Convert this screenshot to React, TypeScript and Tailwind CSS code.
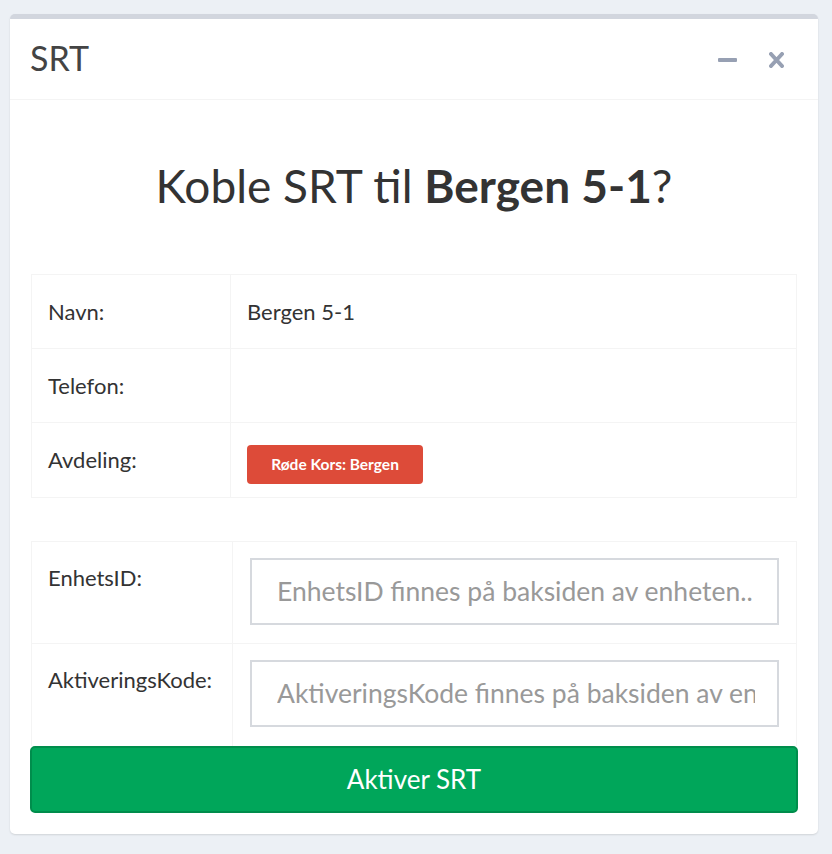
import React from 'react';

const FONT = { fontFamily: 'Lato, "Noto Sans", sans-serif' };

const InfoRow = ({ label, children, last }: { label: string; children?: React.ReactNode; last?: boolean }) => (
    <div className={`grid grid-cols-[199px_1fr] h-[74px] ${last ? '' : 'border-b border-[#f4f4f4]'}`}>
        <div className="flex items-center pl-[16px] border-r border-[#f4f4f4] text-[22px] text-[#333]">{label}</div>
        <div className="flex items-center pl-[16px] text-[22px] text-[#333]">{children}</div>
    </div>
);

const InputRow = ({ label, placeholder, last }: { label: string; placeholder: string; last?: boolean }) => (
    <div className={`grid grid-cols-[201px_1fr] h-[102px] ${last ? '' : 'border-b border-[#f4f4f4]'}`}>
        <div className="pl-[16px] pt-[20px] border-r border-[#f4f4f4] text-[22px] leading-[31px] text-[#333]">{label}</div>
        <div className="px-[17px] pt-[16px]">
            <input
                type="text"
                placeholder={placeholder}
                style={FONT}
                className="w-full h-[67px] border-2 border-[#d6d9de] pl-[25px] pr-[22px] text-[26.5px] text-[#555] placeholder:text-[#999] outline-none bg-white"
            />
        </div>
    </div>
);

export default function App() {
    return (
        <div style={FONT} className="min-h-[854px] bg-[#ecf0f5] pl-[10px] pr-[14px] pt-[14px] pb-[20px]">
            <div className="rounded-[5px] border-t-[5px] border-[#d2d6de] bg-white shadow-[0_1px_2px_rgba(0,0,0,0.12)]">
                {/* header */}
                <div className="h-[81px] flex items-center justify-between pl-[20px] pr-[34px] border-b border-[#f4f4f4]">
                    <h3 className="text-[34px] text-[#444] leading-none -mt-[2px]">SRT</h3>
                    <div className="flex items-center gap-[32px] pt-[2px]">
                        <div className="w-[19px] h-[4px] rounded-[1px] bg-[#97a0b3]" />
                        <svg width="15" height="16" viewBox="0 0 15 16">
                            <path d="M2 2 L13 14 M13 2 L2 14" stroke="#97a0b3" strokeWidth="4" strokeLinecap="round" />
                        </svg>
                    </div>
                </div>

                {/* body */}
                <div className="px-[21px] pb-[21px]">
                    <h2 className="mt-[61px] mb-[62px] text-center text-[46px] leading-[1.1] text-[#333]">
                        Koble SRT til <b className="font-bold">Bergen 5-1</b>?
                    </h2>

                    <div className="border border-[#f4f4f4]">
                        <InfoRow label="Navn:">Bergen 5-1</InfoRow>
                        <InfoRow label="Telefon:" />
                        <InfoRow label="Avdeling:" last>
                            <span className="mt-[10px] inline-flex items-center justify-center w-[176px] h-[39px] rounded-[4px] bg-[#dd4b39] text-white text-[15.5px] font-bold">
                                Røde Kors: Bergen
                            </span>
                        </InfoRow>
                    </div>

                    <div className="mt-[43px] border-x border-t border-[#f4f4f4]">
                        <InputRow label="EnhetsID:" placeholder="EnhetsID finnes på baksiden av enheten.." />
                        <InputRow label="AktiveringsKode:" placeholder="AktiveringsKode finnes på baksiden av enheten.." last />
                    </div>

                    <button
                        style={FONT}
                        className="-mx-px w-[calc(100%+2px)] h-[67px] rounded-[5px] border-2 border-[#008d4c] bg-[#00a65a] text-white text-[26px]"
                    >
                        Aktiver SRT
                    </button>
                </div>
            </div>
        </div>
    );
}
